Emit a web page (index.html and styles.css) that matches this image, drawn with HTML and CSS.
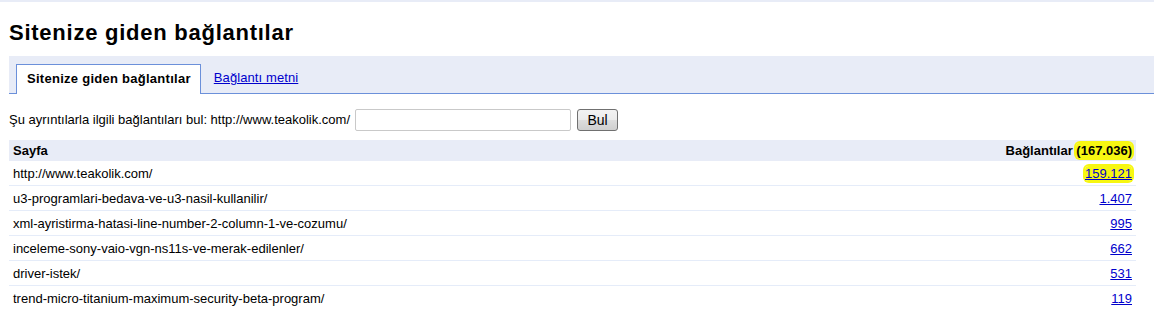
FILE: index.html
```html
<!DOCTYPE html>
<html lang="tr">
<head>
<meta charset="utf-8">
<title>Sitenize giden bağlantılar</title>
<link rel="stylesheet" href="styles.css">
</head>
<body>
<div class="topstrip"></div>
<div class="page">
  <h1 class="title">Sitenize giden bağlantılar</h1>
  <div class="tabs">
    <div class="tab tab-active">Sitenize giden bağlantılar</div>
    <a class="tab-link" href="#">Bağlantı metni</a>
  </div>
  <form class="search">
    <span class="search-label">Şu ayrıntılarla ilgili bağlantıları bul: http://www.teakolik.com/</span>
    <input class="search-input" type="text">
    <button class="search-btn" type="button">Bul</button>
  </form>
  <table class="links">
    <thead>
      <tr>
        <th class="col-page">Sayfa</th>
        <th class="col-count">Bağlantılar <span class="hl">(167.036)</span></th>
      </tr>
    </thead>
    <tbody>
      <tr><td class="col-page">http://www.teakolik.com/</td><td class="col-count"><a href="#" class="hl">159.121</a></td></tr>
      <tr><td class="col-page">u3-programlari-bedava-ve-u3-nasil-kullanilir/</td><td class="col-count"><a href="#">1.407</a></td></tr>
      <tr><td class="col-page">xml-ayristirma-hatasi-line-number-2-column-1-ve-cozumu/</td><td class="col-count"><a href="#">995</a></td></tr>
      <tr><td class="col-page">inceleme-sony-vaio-vgn-ns11s-ve-merak-edilenler/</td><td class="col-count"><a href="#">662</a></td></tr>
      <tr><td class="col-page">driver-istek/</td><td class="col-count"><a href="#">531</a></td></tr>
      <tr><td class="col-page">trend-micro-titanium-maximum-security-beta-program/</td><td class="col-count"><a href="#">119</a></td></tr>
    </tbody>
  </table>
</div>
</body>
</html>
```

FILE: styles.css
```css
html, body {
  margin: 0;
  padding: 0;
  background: #ffffff;
}
body {
  font-family: "Liberation Sans", Arial, sans-serif;
  font-size: 13px;
  color: #000;
}
.topstrip {
  height: 2px;
  background: #e8ecf7;
}
.page {
  padding-left: 9px;
}
.title {
  margin: 19px 0 0 0;
  font-size: 22px;
  letter-spacing: 0.75px;
  line-height: 24px;
  font-weight: bold;
}
.tabs {
  margin-top: 11px;
  height: 37px;
  background: #e8ecf7;
  border-bottom: 1px solid #6b90da;
  display: flex;
  align-items: flex-end;
  padding-left: 7px;
}
.tab {
  height: 29px;
  line-height: 29px;
  box-sizing: border-box;
}
.tab-active {
  height: 30px;
  margin-bottom: -1px;
  background: #fff;
  border: 1px solid #6b90da;
  border-bottom: none;
  padding: 0 9px 0 10px;
  font-weight: bold;
  letter-spacing: 0.27px;
  line-height: 28px;
}
.tab-link {
  color: #0000cc;
  margin-left: 13px;
  line-height: 28px;
  height: 29px;
  letter-spacing: 0.1px;
}
.search {
  display: flex;
  align-items: center;
  margin: 14px 0 0 0;
  height: 23px;
}
.search-label {
  white-space: nowrap;
}
.search-input {
  margin: 0 0 0 5px;
  width: 216px;
  height: 22px;
  box-sizing: border-box;
  border: 1px solid #c9c9c9;
  border-radius: 2px;
  padding: 1px 3px;
  font: inherit;
}
.search-btn {
  margin-left: 6px;
  width: 41px;
  height: 22px;
  box-sizing: border-box;
  border: 1px solid #707070;
  border-radius: 3px;
  background: linear-gradient(#f2f2f2, #ebebeb 50%, #dddddd 51%, #cfcfcf);
  font: inherit;
  font-size: 14px;
  color: #000;
  padding: 0;
}
.links {
  margin-top: 9px;
  width: 1127px;
  border-collapse: collapse;
}
.links th {
  background: #e8ecf7;
  font-weight: bold;
  height: 21px;
  padding: 0 4px;
}
.links td {
  height: 24px;
  padding: 0 4px;
  border-top: 1px solid #e5ecf9;
}
.links tbody tr:first-child td {
  border-top: none;
  height: 24px;
}
.col-page {
  text-align: left;
}
.col-count {
  text-align: right;
}
.col-count a {
  color: #0000cc;
}
.hl {
  background: #f7f712;
  border-radius: 4px;
  box-shadow: 0 0 0 2px #f7f712;
}
```
